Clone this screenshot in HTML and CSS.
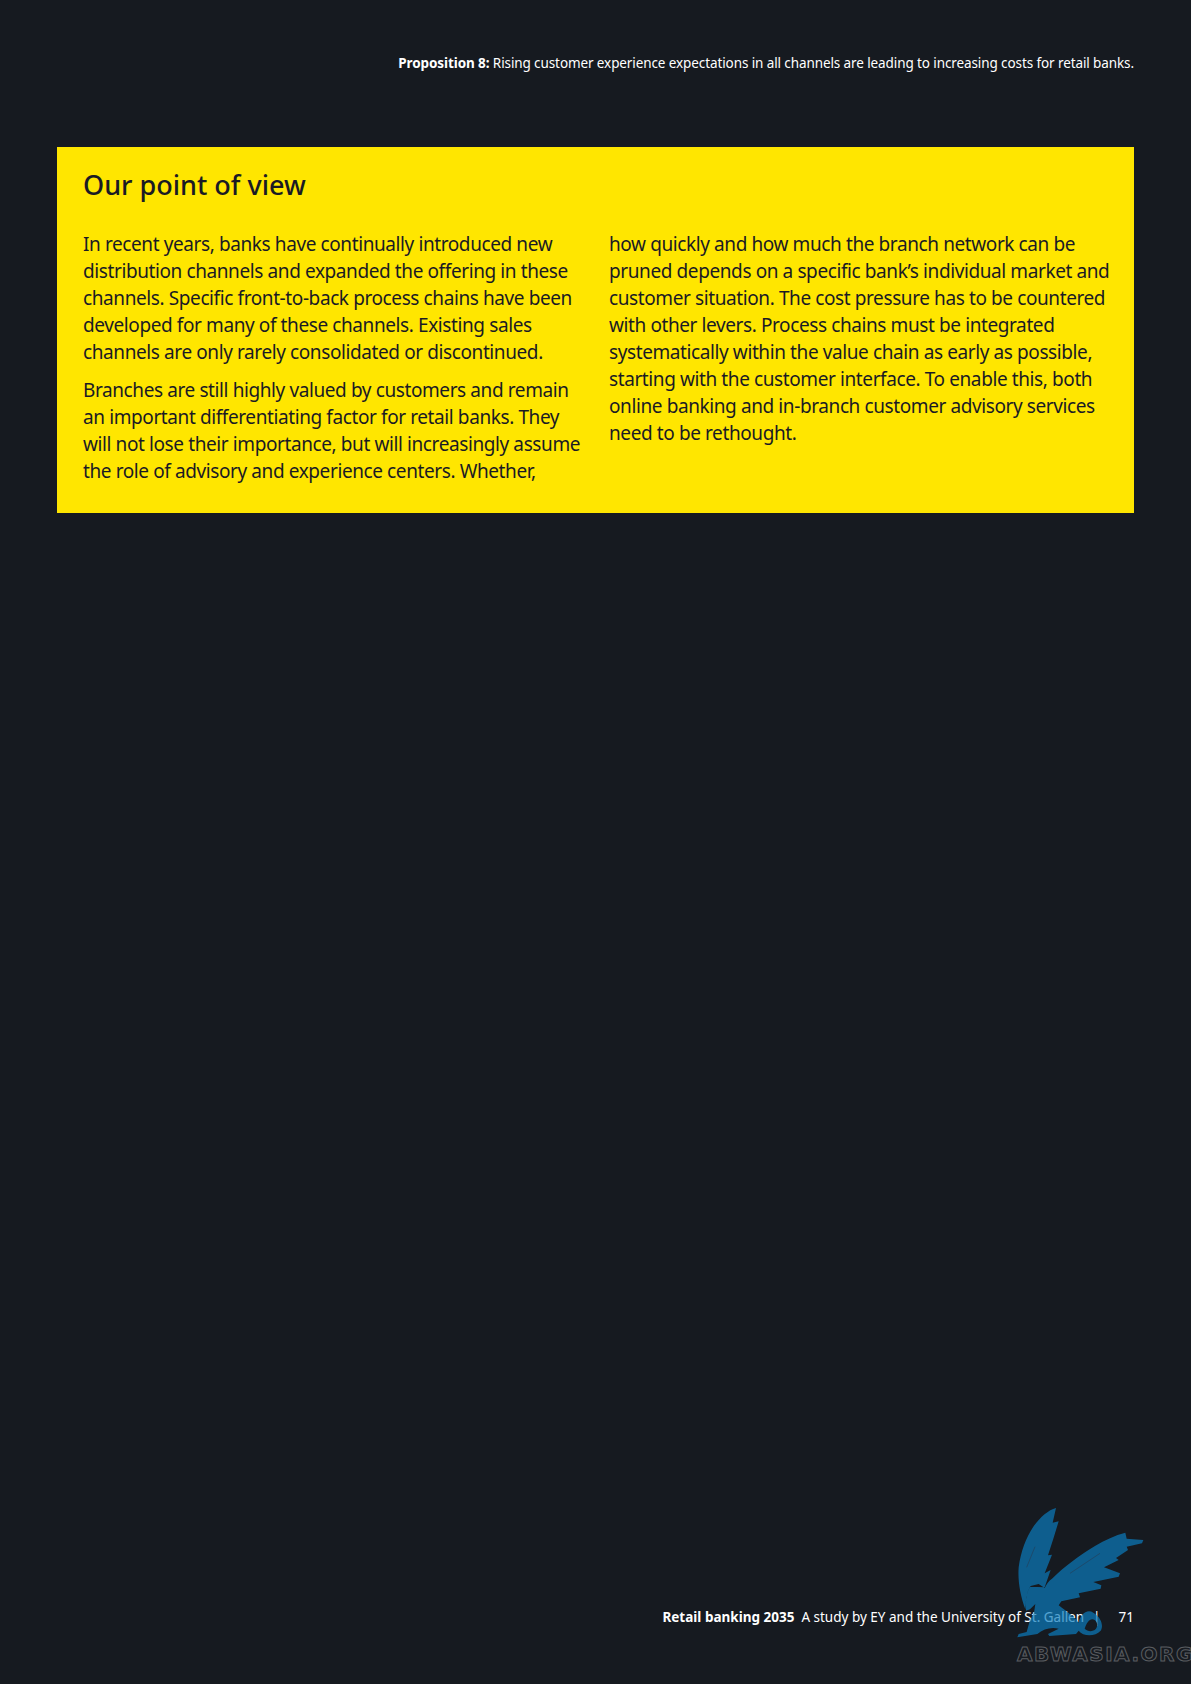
FILE: index.html
```html
<!DOCTYPE html>
<html lang="en">
<head>
<meta charset="utf-8">
<title>Retail banking 2035</title>
<link rel="stylesheet" href="styles.css">
</head>
<body>
<div class="page">
  <header class="top"><b>Proposition 8:</b> Rising customer experience expectations in all channels are leading to increasing costs for retail banks.</header>
  <section class="box">
    <h2 class="title">Our point of view</h2>
    <div class="cols">
      <div class="col">
        <p class="para">In recent years, banks have continually introduced new<br>distribution channels and expanded the offering in these<br>channels. Specific front-to-back process chains have been<br>developed for many of these channels. Existing sales<br>channels are only rarely consolidated or discontinued.</p>
        <p class="para">Branches are still highly valued by customers and remain<br>an important differentiating factor for retail banks. They<br>will not lose their importance, but will increasingly assume<br>the role of advisory and experience centers. Whether,</p>
      </div>
      <div class="col">
        <p class="para">how quickly and how much the branch network can be<br>pruned depends on a specific bank’s individual market and<br>customer situation. The cost pressure has to be countered<br>with other levers. Process chains must be integrated<br>systematically within the value chain as early as possible,<br>starting with the customer interface. To enable this, both<br>online banking and in-branch customer advisory services<br>need to be rethought.</p>
      </div>
    </div>
  </section>
  <footer class="foot"><b>Retail banking 2035</b><span class="study">A study by EY and the University of St. Gallen</span><span class="bar">|</span><span class="num">71</span></footer>
</div>
<svg class="griffin" viewBox="0 0 633 612" aria-hidden="true">
  <path class="griffin-fill" d="M228 84 C205 90 180 112 160 140 C138 172 122 215 116 262 C113 300 120 345 136 388 L139 352 C143 335 147 325 152 318 L176 312 L194 324 C200 312 206 302 216 296 C250 262 300 225 345 198 C375 180 405 166 436 158 L440 176 L490 180 L486 190 L440 200 L444 210 L408 234 L416 240 L372 262 L420 280 L416 290 L340 306 L364 316 L362 326 L296 340 L300 352 L244 364 L236 376 C262 396 285 412 296 428 C300 405 320 385 340 398 C362 410 372 436 362 452 C345 470 310 470 296 452 L288 462 L208 468 L204 462 L236 446 C215 440 190 446 172 462 L112 472 L116 462 L140 456 L150 420 L162 398 L166 372 L150 388 L138 392 C135 350 145 330 150 320 L194 322 L212 270 L194 280 L216 224 L204 226 L220 176 L236 124 L218 128 Z"/>
  <path class="griffin-line" d="M165 200 L140 262 M360 220 L270 280"/>
  <path class="griffin-hole" d="M314 446 C320 425 332 412 344 420 C354 428 354 442 344 450 C334 456 322 454 314 446 Z"/>
</svg>
<div class="mark">ABWASIA.ORG</div>
</body>
</html>
```
FILE: styles.css
```css
html, body {
  margin: 0;
  padding: 0;
  background: #161a20;
}
.page {
  position: relative;
  box-sizing: border-box;
  width: 1191px;
  height: 1684px;
  padding: 54px 57px 0;
  display: flex;
  flex-direction: column;
  font-family: "Noto Sans", sans-serif;
  color: #fff;
}
.top {
  font-size: 13.5px;
  line-height: 19px;
  text-align: right;
  letter-spacing: -0.1px;
}
.box {
  margin-top: 74px;
  box-sizing: border-box;
  height: 366px;
  background: #ffe600;
  color: #1a1a24;
  padding: 20px 26px 0;
}
.title {
  margin: 0;
  font-size: 27px;
  line-height: 36px;
  font-weight: 500;
}
.cols {
  margin-top: 28px;
  display: grid;
  grid-template-columns: 500px 500px;
  gap: 26px;
}
.para {
  margin: 0 0 11px;
  font-size: 19px;
  line-height: 27px;
  letter-spacing: -0.4px;
  white-space: nowrap;
}
.foot {
  margin-top: auto;
  margin-bottom: 57px;
  display: flex;
  justify-content: flex-end;
  align-items: baseline;
  font-size: 13.5px;
  line-height: 19px;
}
.study { margin-left: 7px; }
.bar { margin-left: 9px; }
.num { margin-left: 18px; }
.griffin {
  position: absolute;
  left: 980px;
  top: 1480px;
  width: 211px;
  height: 204px;
}
.griffin-fill { fill: rgba(12, 124, 190, 0.7); }
.griffin-line { fill: none; stroke: #1c4a6c; stroke-width: 3; }
.griffin-hole { fill: #161a20; }
.mark {
  position: absolute;
  left: 1017px;
  top: 1642px;
  font-family: "DejaVu Sans", sans-serif;
  font-weight: 700;
  font-size: 20px;
  line-height: 24px;
  letter-spacing: 1.5px;
  color: transparent;
  -webkit-text-stroke: 1px #5a5d61;
}
```
